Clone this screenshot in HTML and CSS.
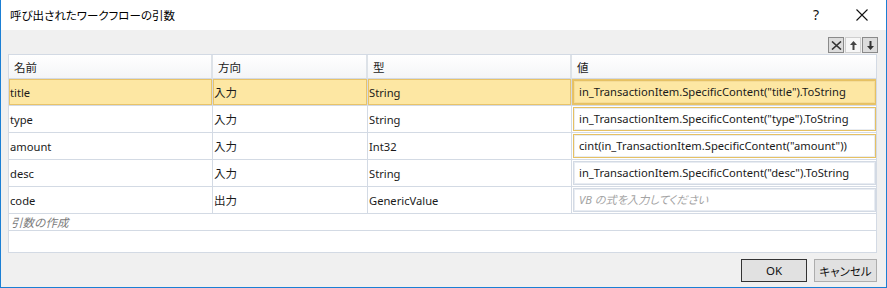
FILE: index.html
```html
<!DOCTYPE html>
<html lang="ja">
<head>
    <meta charset="UTF-8">
    <meta name="viewport" content="width=device-width, initial-scale=1.0">
    <title>呼び出されたワークフローの引数</title>
    <link rel="stylesheet" href="styles.css">
</head>
<body>
    <div class="window">
        <div class="titlebar">
            <span class="title">呼び出されたワークフローの引数</span>
            <span class="help">?</span>
            <span class="close">
                <svg width="12" height="12" viewBox="0 0 12 12"><path d="M0.5 0.5 L11.5 11.5 M11.5 0.5 L0.5 11.5" stroke="#111" stroke-width="1.1" fill="none"/></svg>
            </span>
        </div>

        <div class="content">
            <div class="toolbar">
                <span class="tb-btn">
                    <svg width="11" height="9" viewBox="0 0 11 9"><path d="M1 0.5 L10 8.5 M10 0.5 L1 8.5" stroke="#333" stroke-width="1.6" fill="none"/></svg>
                </span>
                <span class="tb-btn tb-light">
                    <svg width="7" height="9" viewBox="0 0 7 9"><path d="M3.5 0 L7 4 L4.5 4 L4.5 9 L2.5 9 L2.5 4 L0 4 Z" fill="#444"/></svg>
                </span>
                <span class="tb-btn">
                    <svg width="7" height="9" viewBox="0 0 7 9"><path d="M3.5 9 L7 5 L4.5 5 L4.5 0 L2.5 0 L2.5 5 L0 5 Z" fill="#333"/></svg>
                </span>
            </div>

            <div class="grid">
                <table class="args">
                    <colgroup>
                        <col class="col-name">
                        <col class="col-dir">
                        <col class="col-type">
                        <col>
                    </colgroup>
                    <thead>
                        <tr>
                            <th>名前</th>
                            <th>方向</th>
                            <th>型</th>
                            <th>値</th>
                        </tr>
                    </thead>
                    <tbody>
                        <tr class="selected">
                            <td>title</td>
                            <td class="jp">入力</td>
                            <td>String</td>
                            <td class="val"><div class="expr active">in_TransactionItem.SpecificContent("title").ToString</div></td>
                        </tr>
                        <tr>
                            <td>type</td>
                            <td class="jp">入力</td>
                            <td>String</td>
                            <td class="val"><div class="expr active">in_TransactionItem.SpecificContent("type").ToString</div></td>
                        </tr>
                        <tr>
                            <td>amount</td>
                            <td class="jp">入力</td>
                            <td>Int32</td>
                            <td class="val"><div class="expr active">cint(in_TransactionItem.SpecificContent("amount"))</div></td>
                        </tr>
                        <tr>
                            <td>desc</td>
                            <td class="jp">入力</td>
                            <td>String</td>
                            <td class="val"><div class="expr">in_TransactionItem.SpecificContent("desc").ToString</div></td>
                        </tr>
                        <tr>
                            <td>code</td>
                            <td class="jp">出力</td>
                            <td>GenericValue</td>
                            <td class="val"><div class="expr placeholder">VB の式を入力してください</div></td>
                        </tr>
                    </tbody>
                </table>
                <div class="new-arg">引数の作成</div>
            </div>

            <div class="footer">
                <button class="btn btn-ok">OK</button>
                <button class="btn jp">キャンセル</button>
            </div>
        </div>
    </div>
</body>
</html>
```

FILE: styles.css
```css
/* General */
body {
    margin: 0;
    font-family: "Noto Sans", "Noto Sans CJK JP", sans-serif;
    font-size: 11.2px;
    color: #1a1a1a;
}

.jp {
    font-family: "Noto Sans CJK JP", sans-serif;
    font-size: 11.5px;
    font-feature-settings: "palt";
}

.window {
    width: 887px;
    height: 288px;
    box-sizing: border-box;
    border: 1px solid #1b7fd4;
    border-top: none;
    background-color: #f0f0f0;
    display: flex;
    flex-direction: column;
}

/* Title bar */
.titlebar {
    height: 30px;
    background-color: #ffffff;
    display: flex;
    align-items: center;
    padding-left: 9px;
}

.title {
    flex: 1;
    font-family: "Noto Sans CJK JP", sans-serif;
    font-size: 11.5px;
    font-feature-settings: "palt";
    color: #000;
}

.help {
    font-size: 14px;
    color: #111;
    margin-right: 37px;
    margin-top: -2px;
}

.close {
    display: flex;
    margin-right: 18px;
}

/* Content */
.content {
    flex: 1;
    display: flex;
    flex-direction: column;
    padding: 7px 9px 0 7px;
}

.toolbar {
    display: flex;
    justify-content: flex-end;
    margin-right: -1px;
    height: 16px;
}

.tb-btn {
    width: 14px;
    height: 14px;
    border: 1px solid #8a8a8a;
    background-color: #dcdcdc;
    display: flex;
    align-items: center;
    justify-content: center;
    margin-left: 1px;
}

.tb-light {
    border-color: #cfcfcf;
    background-color: #f7f7f7;
}

/* Grid */
.grid {
    margin-top: 1px;
    height: 199px;
    box-sizing: border-box;
    border: 1px solid #d3dae4;
    background-color: #ffffff;
}

.args {
    width: 100%;
    table-layout: fixed;
    border-collapse: separate;
    border-spacing: 0;
}

.col-name { width: 204px; }
.col-dir { width: 155px; }
.col-type { width: 204px; }

.args th {
    height: 23px;
    padding: 0 0 0 5px;
    text-align: left;
    font-weight: normal;
    font-family: "Noto Sans CJK JP", sans-serif;
    font-size: 11.5px;
    background: linear-gradient(#ffffff, #f4f5f7);
    border-right: 2px solid #dde2e8;
    border-bottom: 1px solid #d3dae4;
}

.args th:last-child {
    border-right: none;
}

.args td {
    height: 26px;
    padding: 0 1px;
    border-right: 1px solid #d3dae4;
    border-bottom: 1px solid #d3dae4;
    white-space: nowrap;
    overflow: hidden;
}

.args td:last-child {
    border-right: none;
}

.args tr.selected td {
    background-color: #fde7a3;
    box-shadow: inset 0 0 0 1px #e8c369;
}

.args td.val {
    height: 24px;
    padding: 1px 0 1px 1px;
}

.expr {
    height: 24px;
    line-height: 22px;
    box-sizing: border-box;
    border: 1px solid #d3dae4;
    box-shadow: inset 0 0 0 1px #e8ecf2;
    padding-left: 5px;
    background-color: #ffffff;
}

.expr.active {
    border-color: #e6c163;
}

.selected .expr {
    background-color: #fde7a3;
    box-shadow: inset 0 0 0 1px #f5dc98;
}

.expr.placeholder {
    font-style: italic;
    color: #a3a3a3;
    font-family: "Noto Sans", "Noto Sans CJK JP", sans-serif;
    font-feature-settings: "palt";
}

.new-arg {
    height: 16px;
    line-height: 16px;
    padding-left: 2px;
    font-style: italic;
    color: #7a7a7a;
    font-family: "Noto Sans CJK JP", sans-serif;
    font-size: 11.5px;
    border-bottom: 1px solid #d3dae4;
}

/* Footer buttons */
.footer {
    display: flex;
    justify-content: flex-end;
    gap: 7px;
    margin-top: 6px;
}

.btn {
    height: 23px;
    width: 63px;
    padding: 0;
    font-family: "Noto Sans", "Noto Sans CJK JP", sans-serif;
    font-size: 11.5px;
    color: #111;
    background-color: #e1e1e1;
    border: 1px solid #adadad;
}

.btn-ok {
    width: 66px;
    border-color: #333333;
}
```
